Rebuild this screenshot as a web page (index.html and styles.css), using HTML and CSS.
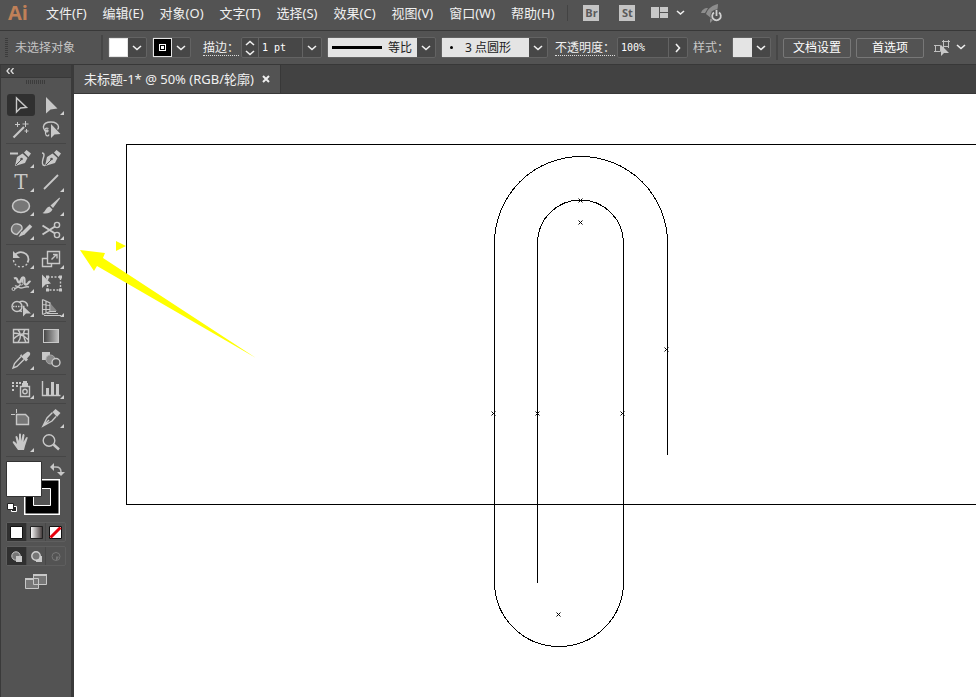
FILE: index.html
```html
<!DOCTYPE html>
<html lang="zh-CN">
<head>
<meta charset="utf-8">
<title>未标题-1*</title>
<link rel="stylesheet" href="styles.css">
</head>
<body>
<div class="app">
  <header class="menubar">
    <span class="logo">Ai</span>
    <nav class="menus">
      <a href="#">文件(F)</a><a href="#">编辑(E)</a><a href="#">对象(O)</a><a href="#">文字(T)</a><a href="#">选择(S)</a><a href="#">效果(C)</a><a href="#">视图(V)</a><a href="#">窗口(W)</a><a href="#">帮助(H)</a>
    </nav>
    <div class="apps">
      <button class="badge">Br</button>
      <button class="badge">St</button>
    </div>
    <button class="bare arrange" aria-label="排列文档">
      <svg width="36" height="14"><path fill="#c8c8c8" d="M0 1h8v11H0zM9 1h8v5H9zM9 7h8v5H9z"/><path class="chev" d="M26 5l3.500 3 3.500-3"/></svg>
    </button>
    <button class="bare" aria-label="GPU 性能">
      <svg width="24" height="20"><path fill="#8d8d8d" d="M17 1C12 2 7 5 5 11l5 4C15 12 17 7 17 1zM7 5C3 5 1 7 0 10l4 0zM9 16v4l3-3v-3z"/><circle cx="15.500" cy="12.500" r="6" fill="#535353"/><path d="M13 9.500a4.300 4.300 0 1 0 5 0M15.500 7v6" fill="none" stroke="#d0d0d0" stroke-width="1.800"/></svg>
    </button>
  </header>

  <div class="controlbar">
    <span class="grip"></span>
    <span class="status">未选择对象</span>
    <span class="rule"></span>
    <div class="combo"><span class="chip white"></span><button class="drop" aria-label="填色"><svg width="10" height="6"><path class="chev" d="M1 1l4 3.500L9 1"/></svg></button></div>
    <div class="combo"><span class="chip ring"><svg width="19" height="19"><rect x="6.500" y="6.500" width="6" height="6" fill="none" stroke="#fff" stroke-width="1"/><rect x="8" y="8" width="3" height="3" fill="#fff"/></svg></span><button class="drop" aria-label="描边颜色"><svg width="10" height="6"><path class="chev" d="M1 1l4 3.500L9 1"/></svg></button></div>
    <label class="dotted stroke-label" for="weight">描边：</label>
    <div class="combo weight"><button class="step" aria-label="增减"><svg width="10" height="16"><path class="chev" d="M1 5l4-3.500L9 5M1 11l4 3.500L9 11"/></svg></button><input id="weight" value="1 pt"><button class="drop" aria-label="粗细"><svg width="10" height="6"><path class="chev" d="M1 1l4 3.500L9 1"/></svg></button></div>
    <div class="combo profile"><span class="light"><i class="bar"></i>等比</span><button class="drop" aria-label="变量宽度"><svg width="10" height="6"><path class="chev" d="M1 1l4 3.500L9 1"/></svg></button></div>
    <div class="combo brush"><span class="light"><i class="dot"></i>3 点圆形</span><button class="drop" aria-label="画笔"><svg width="10" height="6"><path class="chev" d="M1 1l4 3.500L9 1"/></svg></button></div>
    <label class="dotted opacity-label" for="opacity">不透明度：</label>
    <div class="combo opacity"><input id="opacity" value="100%"><button class="drop" aria-label="不透明度"><svg width="6" height="10"><path class="chev" d="M1 1l3.500 4L1 9"/></svg></button></div>
    <span class="style-label">样式：</span>
    <div class="combo"><span class="chip pale"></span><button class="drop" aria-label="样式"><svg width="10" height="6"><path class="chev" d="M1 1l4 3.500L9 1"/></svg></button></div>
    <span class="rule"></span>
    <button class="push">文档设置</button>
    <button class="push">首选项</button>
    <button class="bare select-like" aria-label="选择类似的对象"><svg width="32" height="18"><g fill="none" stroke="#c0c0c0"><path d="M1.500 6.500h5v6h-5zM9.500 2.500h5v5h-5z"/><path d="M0 6.500h2M0 12.500h2M8 2.500h8M14.500 1v8M9.500 1v8"/></g><path fill="#c8c8c8" d="M7 6v11l3-3h5z"/><path class="chev" d="M23 6l4 3.500L31 6"/></svg></button>
  </div>

  <div class="work">
    <aside class="panel">
      <div class="panel-head"><svg width="8" height="6"><path d="M3.500 0L1 3l2.500 3M7.500 0L5 3l2.500 3" fill="none" stroke="#ddd" stroke-width="1.300"/></svg></div>
      <div class="panel-grip"></div>

      <div class="tools">
        <button class="on" aria-label="选择"><svg class="ic"><path class="l" d="M10.500 5v14l4-4 6-.500z"/></svg></button>
        <button class="more" aria-label="直接选择"><svg class="ic"><path class="f" d="M10 4v16.500l4.500-4 7-1z"/></svg></button>
        <button aria-label="魔棒"><svg class="ic"><path class="l" stroke-width="2.200" d="M7.500 20.500L18 10"/><path class="l" stroke-width="1" d="M11.500 5v5M9 7.500h5M19.500 4v6M16.500 7h6M20.500 12v4M18.500 14h4"/></svg></button>
        <button aria-label="套索"><svg class="ic"><path class="l" d="M12 14c-3 0-5-2-4.500-4.500C8 6.500 11 5 15 5s7.500 2 7.500 5c0 1-.500 2-1 2.500"/><path class="l" stroke-width="1.200" d="M12.500 11.500c-3-1-4.500 1-3.500 2.500s3.500 1 3-.500-3 0-2.500 3 3 3 3.500 1"/><path class="f" d="M15 7v14l3.500-3.500 6-.500z"/></svg></button>
      </div>
      <div class="tools">
        <button class="more" aria-label="删除锚点"><svg class="ic"><path class="l" stroke-width="2" d="M4 7.500h8"/><path class="f" d="M9 20l2-9 5.500-3.500 5 4.500L19 17zM18 6.500L20.500 4l4.500 3.500-2.500 3.500z"/><path d="M10 19l5-5" stroke="#535353" stroke-width="1"/><circle cx="15.500" cy="13" r="1.300" fill="#535353"/></svg></button>
        <button aria-label="曲率"><svg class="ic"><path class="l" d="M6 7c3 0 2 3 1 6s-1 7 2 6.500"/><path class="f" d="M9 20l2-9 5.500-3.500 5 4.500L19 17zM18 6.500L20.500 4l4.500 3.500-2.500 3.500z"/><path d="M10 19l5-5" stroke="#535353" stroke-width="1"/><circle cx="15.500" cy="13" r="1.300" fill="#535353"/></svg></button>
        <button class="more type" aria-label="文字"><span>T</span></button>
        <button class="more" aria-label="直线段"><svg class="ic"><path class="l" stroke-width="1.800" d="M8 19L22 5"/></svg></button>
        <button class="more" aria-label="椭圆"><svg class="ic"><ellipse cx="15" cy="12" rx="8.500" ry="6.500" fill="#777" stroke="#c8c8c8" stroke-width="1.500"/></svg></button>
        <button class="more" aria-label="画笔"><svg class="ic"><path class="f" d="M23.500 3.500l.500 1-7 9.500-2.500-2.500zM13.500 12.500l3 3C15 19 10 20.500 6.500 19c3-.500 3-6 7-6.500z"/></svg></button>
        <button class="more" aria-label="Shaper"><svg class="ic"><path d="M11 16.500C7 16 5 13.500 5.500 10.500 6 7.500 8.500 5.500 11.500 6s5 2 4.500 5z" fill="#777" stroke="#c8c8c8"/><path d="M25 7.500l-8 8" stroke="#c8c8c8" stroke-width="3.600"/><path class="f" d="M15.500 13.500l3 3-6 2.500z"/></svg></button>
        <button class="more" aria-label="剪刀"><svg class="ic"><circle class="l" cx="21" cy="7" r="2.600"/><circle class="l" cx="21" cy="17" r="2.600"/><path class="l" stroke-width="2" d="M6.500 7.500l12.500 8M6.500 16.500L19 8.500"/></svg></button>
      </div>
      <div class="tools">
        <button class="more" aria-label="旋转"><svg class="ic"><path class="l" stroke-width="1.800" d="M8.500 8.500c5-6 14-3 14 4 0 1-.500 2-1 3"/><path class="f" d="M7 4v7h7z"/><path class="l" stroke-dasharray="2 2" d="M7.500 13c1 8 10 9 14 3.500"/></svg></button>
        <button class="more" aria-label="比例缩放"><svg class="ic"><path class="l" d="M11.500 4.500h12v12h-12zM11 11.500H6.500v8h9V17M15.500 12.500l5-5M17 7.500h4v4"/></svg></button>
        <button class="more" aria-label="宽度"><svg class="ic"><path class="l" stroke-width="2.200" d="M8 7.500c4-2 3 4 5 4s2-6 4.500-5-.500 6 2 7 3-4 5-2.500"/><path class="l" d="M8 18c4-1 9-6 9-11M9 15c2-1 3 2 6 2s4-2 8-1"/><circle cx="7.500" cy="18" r="1.500" class="l" stroke-width="1"/><circle cx="15.500" cy="12.500" r="1.500" fill="#535353" stroke="#c8c8c8" stroke-width="1"/></svg></button>
        <button aria-label="自由变换"><svg class="ic"><path class="l" stroke-dasharray="2 1.500" d="M11.500 6h13v13h-13z"/><path class="f" d="M10 4.500h3v3h-3zM23 4.500h3v3h-3zM10 17.500h3v3h-3zM23 17.500h3v3h-3zM6 3.500v13.500l3.500-3.500 5.500-1z"/></svg></button>
        <button class="more" aria-label="形状生成器"><svg class="ic"><circle class="l" cx="11" cy="11.500" r="5"/><path class="l" d="M13 7.500c4-3 9 0 8.500 4M13 15.500l3 1"/><path class="l" stroke-dasharray="1.500 1" d="M7 11.500h12"/><path class="f" d="M17 11v10.500l3-3h5z"/></svg></button>
        <button class="more" aria-label="透视网格"><svg class="ic"><path class="f" fill-opacity=".45" d="M15 9l6 7h-6z"/><path class="l" stroke-width="1.200" d="M6.500 4.500v15M6.500 4.500l7.500 3.500v8.500l-7.500 3M10 6v12M6.500 9.500l7.500 1M6.500 14.500h7.500"/><path class="l" stroke-width="1" d="M14 16.500h6M11 18.500h11M8 20.500h17"/></svg></button>
      </div>
      <div class="tools">
        <button aria-label="网格"><svg class="ic"><path class="l" d="M7.500 5.500h15v13h-15zM7.500 9c5 0 10 2 15 7M7.500 15c5-5 10-6 15-5M12 5.500c3 4 3 9 0 13M19 5.500c-3 4-1 9 1 13"/></svg></button>
        <button aria-label="渐变"><svg class="ic"><defs><linearGradient id="g"><stop stop-color="#444"/><stop offset="1" stop-color="#c0c0c0"/></linearGradient></defs><rect x="7.500" y="5.500" width="15" height="13" fill="url(#g)" stroke="#c8c8c8" stroke-width="1"/></svg></button>
        <button class="more" aria-label="吸管"><svg class="ic"><path class="f" d="M16 8l1.500-1.500L21 4c2-1 4 1 3 3l-3 3.500 1 1-2 2-6-6 1.500-1.500z"/><path class="l" d="M15 8.500l-6.500 7L7 20l4-1.500 7-7"/></svg></button>
        <button aria-label="混合"><svg class="ic"><path class="f" d="M6 4h8v8H6z"/><circle cx="14.500" cy="11.500" r="4.500" fill="#8a8a8a" stroke="#aaa" stroke-width="1"/><circle cx="20" cy="14.500" r="4" fill="#535353" stroke="#c8c8c8"/></svg></button>
      </div>
      <div class="tools">
        <button class="more" aria-label="符号喷枪"><svg class="ic"><path class="f" d="M6 5h2v2H6zM10 5h2v2h-2zM13 5h2v2h-2zM6 8h2v2H6zM10 8h2v2h-2zM6 12h2v2H6zM16 6h1V4h4v2h1v3h-6z"/><path class="l" d="M14.500 9.500h9v10h-9z"/><circle class="l" cx="19" cy="14.500" r="2.200"/></svg></button>
        <button class="more" aria-label="柱形图"><svg class="ic"><path class="l" d="M6.500 4v14.500h18"/><path class="f" d="M10 11h3v7h-3zM15 5h3v13h-3zM20 7h3v11h-3z"/></svg></button>
      </div>
      <div class="tools">
        <button aria-label="画板"><svg class="ic"><path d="M10.500 8.500h9l3 3v7h-12z" fill="#777" stroke="#c8c8c8"/><path class="l" stroke-width="1" d="M10.500 3v4M5 8.500h4"/></svg></button>
        <button class="more" aria-label="切片"><svg class="ic"><path class="f" d="M16.500 6l3-3 5 4-3.500 4z"/><path class="l" d="M16.500 6.500L11 12l-4 8 9-5 4-4.500M7 20l6-6"/></svg></button>
        <button class="more" aria-label="抓手"><svg class="ic"><path class="f" d="M12 20l-5-7c-1-2 1-2 2-1l2 2-1.500-7c0-1.500 1.500-1.500 2 0L13 11V4.500c0-1.500 2-1.500 2 0V11l1.500-6c.500-1.500 2-1 2 .500L17.500 12l2.500-4.500c1-1 2-.500 1.500 1L19 16l-1 4z"/></svg></button>
        <button aria-label="缩放"><svg class="ic"><circle class="l" cx="13" cy="10.500" r="5.800"/><path class="l" stroke-width="2.600" d="M17.500 14.500l5.500 5"/></svg></button>
      </div>

      <div class="paint">
        <svg width="60" height="58"><path fill="#fff" d="M18 20h36v36H18z"/><path fill="#000" d="M19.500 21.500h33v33h-33z"/><path fill="#535353" stroke="#fff" d="M27.500 29.500h17v17h-17z"/><path fill="#fff" stroke="#333" d="M.500 2.500h35v35H.500z"/><path d="M47 8h3c3 0 5 2 5 5v2" fill="none" stroke="#c0c0c0" stroke-width="1.500"/><path class="f" d="M44 8l4-4v8zM51 13h8l-4 4z"/><path fill="#222" stroke="#fff" d="M5.500 47.500h5v5h-5z"/><path fill="#fff" stroke="#222" d="M1.500 44.500h6v6h-6z"/></svg>
      </div>
      <div class="trio">
        <button class="on" aria-label="颜色"><svg width="13" height="13"><path fill="#fff" stroke="#111" d="M.500.500h12v12H.500z"/></svg></button>
        <button aria-label="渐变填充"><svg width="13" height="13"><defs><linearGradient id="h"><stop stop-color="#fff"/><stop offset="1" stop-color="#403838"/></linearGradient></defs><path fill="url(#h)" stroke="#222" d="M.500.500h12v12H.500z"/></svg></button>
        <button aria-label="无"><svg width="13" height="13"><path fill="#fff" stroke="#111" d="M.500.500h12v12H.500z"/><path stroke="#e8000c" stroke-width="3" d="M1.500 11.500l10-10"/></svg></button>
      </div>
      <div class="trio modes">
        <button class="on" aria-label="正常绘图"><svg width="13" height="13"><circle cx="6" cy="6" r="4.200" fill="#777" stroke="#c8c8c8"/><path class="f" d="M6 6h6v6H6z"/></svg></button>
        <button aria-label="背面绘图"><svg width="13" height="13"><path class="f" d="M6 6h6v6H6z"/><circle cx="6" cy="6" r="4.200" fill="#777" stroke="#d0d0d0" stroke-width="1.400"/></svg></button>
        <button aria-label="内部绘图"><svg width="13" height="13"><circle cx="7" cy="6.500" r="4" fill="none" stroke="#777"/><path fill="#777" d="M7 6.500h3L8 10H7z"/></svg></button>
      </div>
      <button class="bare screen" aria-label="更改屏幕模式"><svg width="22" height="17"><path fill="#777" stroke="#c8c8c8" d="M.500 5.500h13v10H.500zM8.500 1.500h13v10h-13z"/><path class="f" d="M0 5h8v2H0zM8 1h14v2H8z"/></svg></button>
    </aside>

    <main class="doc">
      <div class="tabs"><div class="tab"><span>未标题-1* @ 50% (RGB/轮廓)</span><button class="bare" aria-label="关闭"><svg width="8" height="8"><path d="M1 1l6 6M7 1L1 7" stroke="#eee" stroke-width="2"/></svg></button></div></div>
      <svg class="canvas">
        <defs><path id="x" d="M-2-2l4 4M2-2l-4 4"/></defs>
        <g fill="none" stroke="#000" shape-rendering="crispEdges">
          <rect x="52.500" y="50.500" width="2000" height="360"/>
          <path d="M593.500 361V149A86.500 86.500 0 0 0 420.500 149V488A64.500 64.500 0 0 0 549.500 488V149A43 43 0 0 0 463.500 149V489"/>
        </g>
        <g stroke="#000">
          <use href="#x" x="506.500" y="106.500"/><use href="#x" x="506.500" y="128.500"/><use href="#x" x="592.500" y="255.500"/><use href="#x" x="419.500" y="319.500"/><use href="#x" x="463.500" y="319.500"/><use href="#x" x="548.500" y="319.500"/><use href="#x" x="484.500" y="520.500"/>
        </g>
        <path fill="#ff0" d="M6 156l25 3-2 5 153 100-159-92-3 5zM42 147l10 5-10 5z"/>
      </svg>
    </main>
  </div>
</div>
</body>
</html>
```
FILE: styles.css
```css
* { box-sizing: border-box; }
body {
  margin: 0;
  background: #535353;
  color: #e6e6e6;
  font: 12px/18px "Noto Sans", "Noto Sans CJK SC", sans-serif;
}
button, input { font: inherit; color: inherit; margin: 0; padding: 0; border: 0; background: none; border-radius: 0; }
svg { display: block; flex: none; }
.app { display: flex; flex-direction: column; min-height: 100vh; }
.chev { fill: none; stroke: #f0f0f0; stroke-width: 1.6; }
.bare { display: flex; align-items: center; }

.menubar {
  display: flex;
  align-items: center;
  height: 31px;
  padding: 0 8px 4px;
  border-bottom: 1px solid #383838;
  white-space: nowrap;
}
.logo { width: 30px; color: #c08058; font: bold 20px/24px "Open Sans", "Noto Sans", sans-serif; }
.menus { display: flex; font-size: 13px; }
.menus a { padding: 0 8px; color: #f0f0f0; text-decoration: none; }
.apps { display: flex; gap: 20px; margin-left: 5px; padding-left: 15px; border-left: 1px solid #434343; }
.badge {
  width: 16px;
  height: 16px;
  background: #c4c4c4;
  color: #5a5a5a;
  font: bold 11px/16px "Open Sans", sans-serif;
}
.arrange { margin: 0 14px 0 16px; }

.controlbar {
  display: flex;
  align-items: center;
  height: 34px;
  padding-left: 5px;
  border-bottom: 1px solid #383838;
  white-space: nowrap;
}
.grip { width: 3px; height: 20px; margin-right: 7px; background: repeating-linear-gradient(#3c3c3c 0 1px, transparent 1px 2px); }
.status { width: 86px; color: #c4c4c4; }
.rule { width: 2px; height: 25px; margin-right: 5px; background: #464646; }
.combo { display: flex; height: 21px; margin-right: 5px; border: 1px solid #636363; border-radius: 2px; background: #474747; }
.chip { width: 19px; height: 19px; border: 1px solid #e4e4e4; }
.white { background: #fff; }
.pale { background: #e4e4e4; }
.ring { background: #000; }
.ring svg { margin: -1px; }
.drop { display: flex; align-items: center; justify-content: center; width: 18px; }
.dotted { border-bottom: 1px dotted #ddd; line-height: 15px; color: #f0f0f0; }
.stroke-label { margin: 0 2px 0 7px; }
.step { display: flex; align-items: center; justify-content: center; width: 17px; border-right: 1px solid #636363; }
.combo input { width: 44px; padding-left: 3px; border-right: 1px solid #636363; color: #fff; font: 10px/18px "DejaVu Sans Mono", monospace; }
.opacity-label { margin: 0 2px; }
.combo.opacity input { width: 51px; }
.light { display: flex; align-items: center; background: #e4e4e4; color: #222; }
.profile .light { width: 89px; padding-left: 4px; gap: 6px; }
.bar { width: 50px; height: 3px; background: #000; }
.brush .light { width: 87px; padding-left: 8px; gap: 12px; }
.dot { width: 3px; height: 3px; border-radius: 50%; background: #000; }
.style-label { margin-right: 3px; color: #c8c8c8; }
.push { width: 68px; height: 20px; margin-right: 5px; border: 1px solid #777; border-radius: 2px; color: #fff; }
.select-like { margin-left: 5px; }

.work { display: flex; flex: 1; }
.panel { width: 74px; border: solid #3a3a3a; border-width: 0 3px 0 1px; }
.panel-head { display: flex; align-items: center; height: 13px; padding-left: 5px; background: #424242; border-bottom: 1px solid #383838; }
.panel-grip { width: 19px; height: 4px; margin: 2px auto 9px 25px; background: repeating-linear-gradient(90deg, #3c3c3c 0 1px, transparent 1px 2px); }
.tools { display: grid; grid-template-columns: 30px 30px; width: 60px; margin-left: 5px; }
.tools::after { content: ""; grid-column: 1 / 3; height: 1px; margin: 2px 0; background: #464646; }
.tools button { position: relative; height: 24px; border-radius: 3px; }
.tools .on::before { content: ""; position: absolute; inset: 1px; border-radius: 3px; background: #303030; }
.ic { position: relative; width: 30px; height: 24px; stroke-width: 1.4; }
.more::after { content: ""; position: absolute; right: 2px; bottom: 2px; border: 2px solid; border-color: transparent #d0d0d0 #d0d0d0 transparent; }
.type { color: #c8c8c8; font: 20px/24px "DejaVu Serif", serif; }
.f { fill: #c8c8c8; }
.l { fill: none; stroke: #c8c8c8; }
.paint { height: 63px; margin-left: 5px; }
.trio { display: flex; width: 60px; height: 20px; margin: 0 0 4px 5px; border: 1px solid #5e5e5e; border-radius: 2px; }
.trio button { display: flex; flex: 1; align-items: center; justify-content: center; }
.trio button + button { border-left: 1px solid #484848; }
.trio .on { background: #303030; }
.screen { margin: 7px 0 0 24px; }

.doc { display: flex; flex: 1; flex-direction: column; min-width: 0; }
.tabs { display: flex; height: 29px; background: #424242; border-bottom: 1px solid #383838; }
.tab { display: flex; align-items: center; gap: 8px; padding: 0 10px; background: #535353; border-right: 1px solid #383838; color: #f0f0f0; font-size: 13px; white-space: nowrap; }
.canvas { flex: 1; width: 100%; min-height: 560px; background: #fff; }
```
